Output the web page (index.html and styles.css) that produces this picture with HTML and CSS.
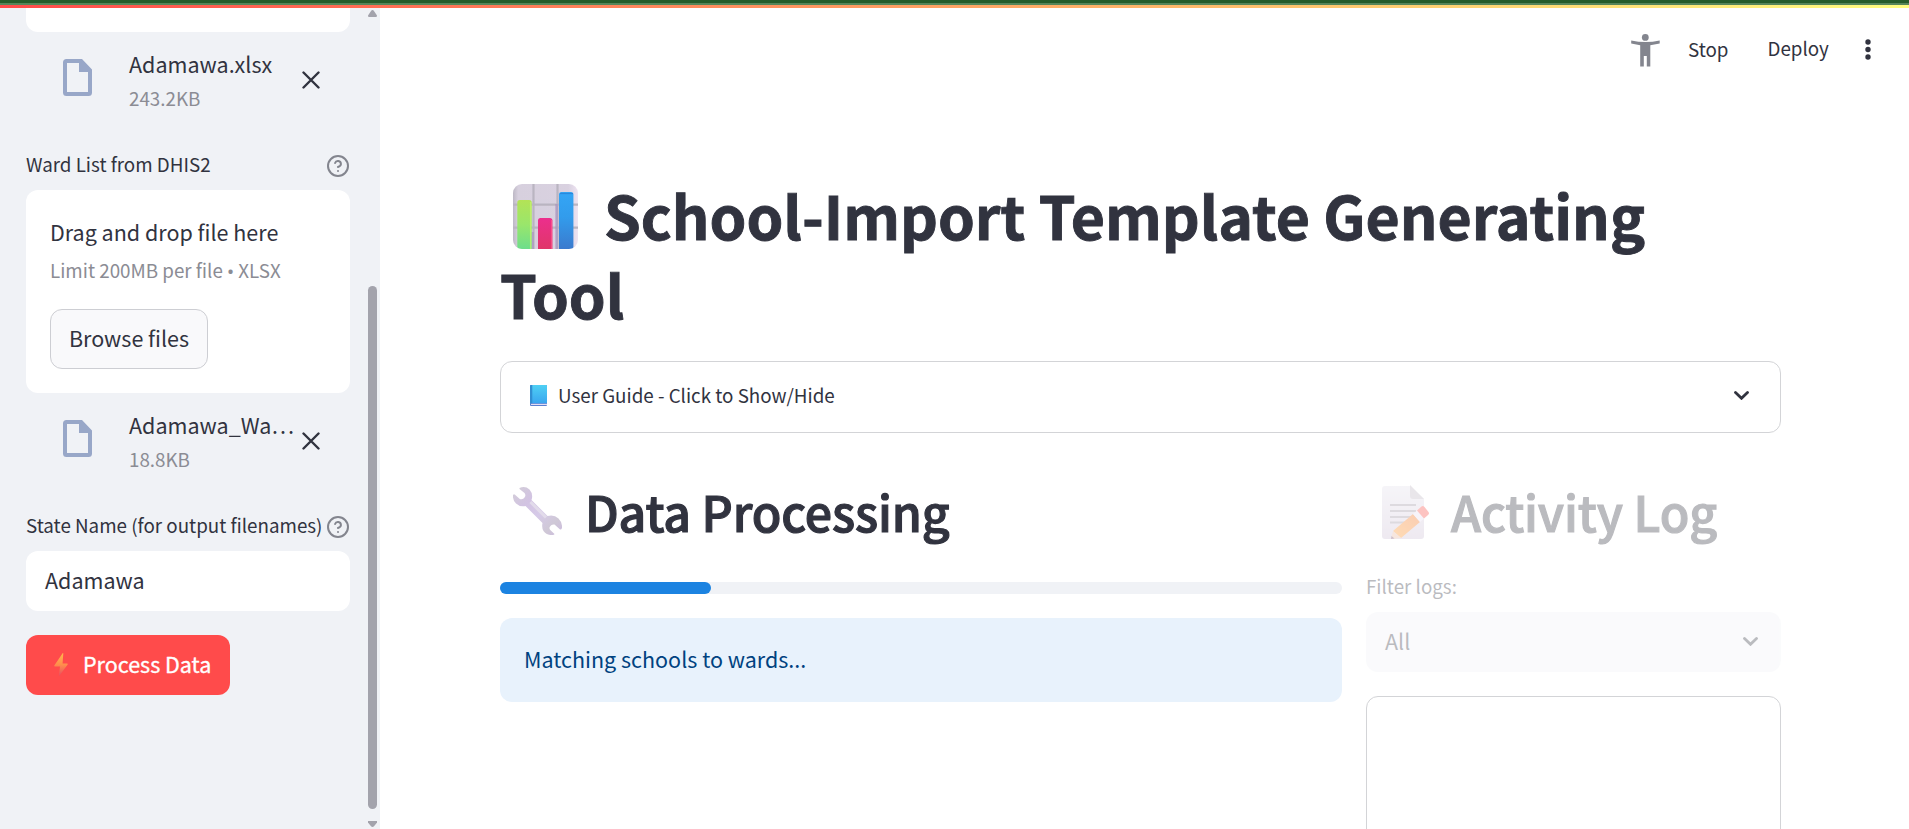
FILE: index.html
```html
<!DOCTYPE html>
<html lang="en">
<head>
<meta charset="utf-8">
<title>School-Import Template Generating Tool</title>
<link rel="stylesheet" href="styles.css">
</head>
<body>
<div class="decoration"></div>
<div class="app">
  <aside class="sidebar">
    <div class="sidebar-content">
      <div class="dropzone dropzone-cut"></div>
      <div class="file-row">
        <svg class="file-icon" viewBox="0 0 29 37"><path fill-rule="evenodd" d="M3.500 0H19L29 10.500V33.500Q29 37 25.500 37H3.500Q0 37 0 33.500V3.500Q0 0 3.500 0ZM4 4V33H25V13H16V4Z"/></svg>
        <div class="file-info"><div class="file-name">Adamawa.xlsx</div><div class="file-size">243.2KB</div></div>
        <svg class="close-icon" viewBox="0 0 18 18"><path d="M1.500 1.500L16.500 16.500M16.500 1.500L1.500 16.500"/></svg>
      </div>
      <div class="label"><span>Ward List from DHIS2</span>
        <svg class="help-icon" viewBox="0 0 24 24"><circle cx="12" cy="12" r="10"/><path d="M9.090 9a3 3 0 0 1 5.830 1c0 2-3 3-3 3M12 17h.01"/></svg>
      </div>
      <div class="dropzone">
        <div class="drop-title">Drag and drop file here</div>
        <div class="drop-limit">Limit 200MB per file <span class="bullet">•</span> XLSX</div>
        <button class="browse">Browse files</button>
      </div>
      <div class="file-row">
        <svg class="file-icon" viewBox="0 0 29 37"><path fill-rule="evenodd" d="M3.500 0H19L29 10.500V33.500Q29 37 25.500 37H3.500Q0 37 0 33.500V3.500Q0 0 3.500 0ZM4 4V33H25V13H16V4Z"/></svg>
        <div class="file-info"><div class="file-name">Adamawa_Wa<span class="ellipsis">…</span></div><div class="file-size">18.8KB</div></div>
        <svg class="close-icon" viewBox="0 0 18 18"><path d="M1.500 1.500L16.500 16.500M16.500 1.500L1.500 16.500"/></svg>
      </div>
      <div class="label"><span>State Name (for output filenames)</span>
        <svg class="help-icon" viewBox="0 0 24 24"><circle cx="12" cy="12" r="10"/><path d="M9.090 9a3 3 0 0 1 5.830 1c0 2-3 3-3 3M12 17h.01"/></svg>
      </div>
      <div class="text-input">Adamawa</div>
      <button class="process">
        <svg class="bolt" viewBox="0 0 14 24"><defs><linearGradient id="bolt" x1="0" y1="0" x2="0" y2="1"><stop offset="0" stop-color="#ffb84c"/><stop offset=".5" stop-color="#ff8d4c"/><stop offset="1" stop-color="#e84a62"/></linearGradient></defs><path fill="url(#bolt)" d="M8.800 0L.3 12.600Q0 13.500 1 13.500H6L4.800 23.400L13.700 11.500Q14 10.500 13 10.500H8.600L9.300 .3Z"/></svg>
        <span>Process Data</span>
      </button>
    </div>
    <div class="scrollbar">
      <svg class="arrow" viewBox="0 0 9 7"><path d="M4.500 0Q5.300 0 5.800 .8L9 5.500Q9 7 8 7H1Q0 7 0 5.500L3.200 .8Q3.700 0 4.500 0Z"/></svg>
      <div class="thumb"></div>
      <svg class="arrow" viewBox="0 0 9 7"><path d="M0 0H9V1.500L6 5.200Q4.500 6.800 3 5.200L0 1.500Z"/></svg>
    </div>
  </aside>
  <main class="main">
    <header class="toolbar">
      <svg class="person" viewBox="0 0 29 33"><circle cx="14.300" cy="3.400" r="3.400"/><path d="M.2 6.500Q14.500 9.500 28.700 6.500V9.600L19.300 11.300V32.500H15.800V22H12.800V32.500H9.200V11.300L.2 9.600Z"/></svg>
      <span class="stop">Stop</span>
      <span class="deploy">Deploy</span>
      <svg class="dots" viewBox="0 0 6 22"><circle cx="3" cy="3" r="2.700"/><circle cx="3" cy="10.500" r="2.700"/><circle cx="3" cy="18" r="2.700"/></svg>
    </header>
    <div class="block">
      <h1><svg class="chart" viewBox="0 0 65 65">
        <defs>
          <clipPath id="tile"><rect width="65" height="65" rx="9"/></clipPath>
          <linearGradient id="tilebg"><stop offset="0" stop-color="#bdb8c5"/><stop offset=".08" stop-color="#d7d0de"/><stop offset=".85" stop-color="#d9d1e0"/><stop offset="1" stop-color="#eee4f2"/></linearGradient>
          <linearGradient id="g1" x1="0" y1="0" x2="0" y2="1"><stop offset="0" stop-color="#b3e356"/><stop offset=".45" stop-color="#9ae66b"/><stop offset="1" stop-color="#64dc92"/></linearGradient>
          <linearGradient id="g2" x1="0" y1="0" x2="0" y2="1"><stop offset="0" stop-color="#ec2e8d"/><stop offset="1" stop-color="#de3863"/></linearGradient>
          <linearGradient id="g3" x1="0" y1="0" x2="0" y2="1"><stop offset="0" stop-color="#34a5f5"/><stop offset=".4" stop-color="#329cec"/><stop offset="1" stop-color="#3c75c9"/></linearGradient>
        </defs>
        <g clip-path="url(#tile)">
          <rect width="65" height="65" fill="url(#tilebg)"/>
          <path d="M20.500 0V65M44.500 0V65M0 20.700H65M0 43.700H65" stroke="#bab5c1" stroke-width="2.200"/>
          <path d="M19.500 48V65M43.500 20V65" stroke="#a48dc0" stroke-width="2.500" opacity=".6"/>
          <rect x="4.300" y="16" width="14.400" height="54" rx="2.500" fill="url(#g1)"/><path d="M17.700 18V65" stroke="#c8f36e" stroke-width="1.500" opacity=".7"/>
          <rect x="25" y="34" width="14.400" height="36" rx="2.500" fill="url(#g2)"/><path d="M38.600 36V65" stroke="#ff5a90" stroke-width="1.300" opacity=".7"/>
          <rect x="46" y="8" width="14.400" height="62" rx="2.500" fill="url(#g3)"/><path d="M47 9.500H60" stroke="#2677cc" stroke-width="1.200" opacity=".6"/>
        </g></svg><span>School-Import Template Generating</span><br><span class="tool">Tool</span></h1>
      <div class="expander">
        <svg class="book" viewBox="0 0 17 21"><defs><linearGradient id="bk" x1="0" y1="0" x2="0" y2="1"><stop offset="0" stop-color="#4fd0f4"/><stop offset="1" stop-color="#3aa6ef"/></linearGradient></defs><rect width="17" height="21" rx="1" fill="#5b7fd0"/><rect x="1" y="18.800" width="16" height="1.200" fill="#e3ddf4"/><rect x="2" width="15" height="18.300" rx="1" fill="url(#bk)"/><rect width="2.300" height="18.500" rx="1" fill="#318fd2"/></svg>
        <span>User Guide - Click to Show/Hide</span>
        <svg class="chevron" viewBox="0 0 15 9"><path d="M1.500 1.500L7.500 7.300L13.500 1.500"/></svg>
      </div>
      <div class="columns">
        <section class="processing">
          <h2><svg class="wrench" viewBox="0 0 49 48"><defs><linearGradient id="wr" x1="0" y1="0" x2="1" y2="1"><stop offset="0" stop-color="#d3cfd7"/><stop offset=".3" stop-color="#d2c3e2"/><stop offset=".55" stop-color="#d6cae8"/><stop offset=".8" stop-color="#cfc8d6"/><stop offset="1" stop-color="#cdbbe0"/></linearGradient></defs><path fill="url(#wr)" d="M6.500 1Q12-1.500 16.500 2.500Q20.500 7 18.500 13L34.500 29Q41 27.200 45.500 31.500Q49.500 35.500 49 41Q48 43.500 46.500 42L41.500 37.500Q38 37 36.500 40.500Q36.300 42.300 37.500 43.300L41.500 47Q41.500 48 39.500 48Q33.500 48.500 30.500 44Q28.500 40.500 29.500 36L12.500 19Q6.500 20 3 16.500Q-.5 13 0 8Q1 6.500 2 7.700L6.800 12Q10.500 13 12.300 9Q12.500 7 11.500 6L6.500 2Z"/><path d="M17.500 15L33 30.500" stroke="#e2dbea" stroke-width="3"/></svg><span>Data Processing</span></h2>
          <div class="progress"><div class="progress-fill"></div></div>
          <div class="alert"><span>Matching schools to wards...</span></div>
        </section>
        <section class="log">
          <div class="stale">
            <h2><svg class="memo" viewBox="0 0 47 54"><defs><linearGradient id="pp" x1="0" y1="0" x2="0" y2="1"><stop offset="0" stop-color="#e4e1ec"/><stop offset="1" stop-color="#cdbfd5"/></linearGradient><linearGradient id="pc" x1="1" y1="0" x2="0" y2="1"><stop offset="0" stop-color="#f06a1c"/><stop offset="1" stop-color="#ff9620"/></linearGradient></defs><path fill="url(#pp)" d="M3 1H28L42 14V51Q42 54 39 54H3Q0 54 0 51V4Q0 1 3 1Z"/><path fill="#bdb5c2" d="M28 0L42 14H31Q28 14 28 11Z"/><path d="M8 20H34M8 26H34M8 32H30M8 37.500H24" stroke="#9991a0" stroke-width="2"/><path fill="url(#pc)" d="M31 29L38 37L19 53L11 46Z"/><path fill="#e9e0f0" d="M31 29L35 25.500L42 33.500L38 37Z"/><path fill="#fb4d45" d="M35 25.500L39.500 21.500Q41 20.500 42.500 22L46.500 27Q47.500 28.500 46 30L42 33.500Z"/><path fill="#e7b59b" d="M11 46L19 53L9 54Z"/><path fill="#6d4566" d="M9.500 51L12.500 53.600L9 54Z"/></svg><span>Activity Log</span></h2>
            <div class="filter-label">Filter logs:</div>
            <div class="select"><span>All</span><svg class="chevron select-chevron" viewBox="0 0 15 9"><path d="M1.500 1.500L7.500 7.300L13.500 1.500"/></svg></div>
          </div>
          <div class="log-box"></div>
        </section>
      </div>
    </div>
  </main>
</div>
</body>
</html>
```
FILE: styles.css
```css
* { box-sizing: border-box; }
body {
  margin: 0;
  width: 1909px;
  height: 829px;
  overflow: hidden;
  background: #fff;
  color: #31333f;
  font-family: "Noto Sans CJK SC", "Noto Sans", sans-serif;
  font-size: 21.500px;
  line-height: 36px;
  white-space: nowrap;
}
svg { display: block; flex: none; }
button { font: inherit; color: inherit; margin: 0; }
.decoration {
  position: absolute;
  z-index: 2;
  left: 0;
  top: 0;
  width: 100%;
  height: 8px;
  background: linear-gradient(#265c2b 0 3px, #55855a 3px 5px, transparent 5px), linear-gradient(90deg, #ff4b4b, #fffd80);
}
.app { display: flex; height: 829px; overflow: hidden; }

.sidebar { display: flex; width: 380px; flex: none; background: #f0f2f6; }
.sidebar-content { width: 324px; margin-left: 26px; flex: none; }
.dropzone { height: 203px; padding: 24px; border-radius: 12px; background: #fff; }
.dropzone-cut { height: 32px; padding: 0; border-radius: 0 0 12px 12px; }
.file-row { display: flex; height: 116px; padding: 14px 0 0 37px; }
.file-icon { width: 29px; height: 37px; margin-top: 13px; fill: #98a7c8; }
.file-info { width: 168px; margin-left: 37px; flex: none; }
.file-size, .label, .drop-limit, .filter-label { font-size: 18.800px; line-height: 31.500px; }
.file-size, .drop-limit { color: #8b8c94; }
.bullet { font-family: "Noto Sans", sans-serif; }
.ellipsis { font-family: "Noto Sans CJK KR", sans-serif; }
.close-icon { width: 18px; height: 18px; margin: 25px 0 0 5px; fill: none; stroke: #31333f; stroke-width: 2.400; stroke-linecap: round; }
.label { display: flex; justify-content: space-between; height: 42px; }
.help-icon { width: 24px; height: 24px; margin: 6px 0 0; fill: none; stroke: #83858e; stroke-width: 2; stroke-linecap: round; stroke-linejoin: round; }
.drop-limit { margin-top: 4px; }
.browse { display: block; width: 158px; height: 60px; margin-top: 21.500px; padding: 0 0 3px; border: 1px solid #cdced3; border-radius: 12px; background: #f9f9fb; }
.text-input { height: 60px; padding: 11px 19px; border-radius: 12px; background: #fff; }
.process { display: flex; width: 204px; height: 60px; margin-top: 24px; padding: 11px 0 0 28px; border: 0; border-radius: 12px; background: #ff4b4b; color: #fff; -webkit-text-stroke: .35px #fff; }
.bolt { width: 14px; height: 24px; margin: 7px 15px 0 0; }
.scrollbar { display: flex; flex-direction: column; width: 9px; margin-left: 18px; padding-top: 10px; }
.arrow { width: 9px; height: 7px; fill: #a3a3ac; }
.thumb { height: 523px; margin: 269px 0 12px; border-radius: 5px; background: #a3a3ac; }

.main { flex: 1; }
.toolbar { display: flex; height: 100px; padding-left: 1251px; font-size: 18.800px; line-height: 31.500px; }
.person { width: 29px; height: 33px; margin-top: 34px; fill: #83858e; }
.stop { width: 40px; margin: 33px 0 0 28px; }
.deploy { width: 61px; margin: 32px 0 0 39.500px; }
.dots { width: 6px; height: 22px; margin: 39px 0 0 36.500px; fill: #31333f; }
.block { width: 1281px; margin: 75px 0 0 120px; }
h1, h2 { margin: 0; }
h1 { height: 186px; font-size: 58.950px; line-height: 79px; font-weight: 700; -webkit-text-stroke: .9px #31333f; }
.chart { display: inline-block; width: 65px; height: 65px; margin: 0 26px 0 13px; vertical-align: -9px; }
.expander { display: flex; height: 72px; padding: 19px 24px 0 30px; border: 1px solid #d3d4d7; border-radius: 12px; font-size: 18.800px; line-height: 31.500px; }
.expander span { margin-top: -2px; }
.book { width: 17px; height: 21px; margin: 4px 11px 0 -1px; }
.chevron { width: 15px; height: 9px; fill: none; stroke: #31333f; stroke-width: 2.800; stroke-linecap: round; stroke-linejoin: miter; }
.expander .chevron { margin: 10px 7px 0 auto; }
.columns { display: flex; gap: 24px; padding-top: 48px; }
.processing { width: 842px; }
.log { width: 415px; flex: none; }
h2 { display: flex; height: 101px; font-size: 48.300px; line-height: 65px; font-weight: 500; letter-spacing: -.16px; -webkit-text-stroke: 1.100px #31333f; }
h2 span { margin-top: -2.500px; }
.wrench { width: 49px; height: 48px; margin: 6px 23px 0 13px; }
.memo { width: 47px; height: 54px; margin: 4px 22px 0 16px; }
.progress { height: 12px; border-radius: 6px; background: #f0f2f6; }
.progress-fill { width: 25%; height: 12px; border-radius: 6px; background: #1c83e1; }
.alert { height: 84px; margin-top: 24px; padding: 23px 24px; border-radius: 12px; background: #e8f2fc; color: #004280; }
.stale { opacity: .33; }
.stale h2 { height: 89px; }
.filter-label { height: 42px; }
.select { display: flex; justify-content: space-between; height: 60px; padding: 11px 23px 0 19px; border-radius: 12px; background: #f0f2f6; }
.select-chevron { margin-top: 14px; }
.log-box { height: 300px; margin-top: 24px; border: 1px solid #d3d4d7; border-radius: 12px; }
```
